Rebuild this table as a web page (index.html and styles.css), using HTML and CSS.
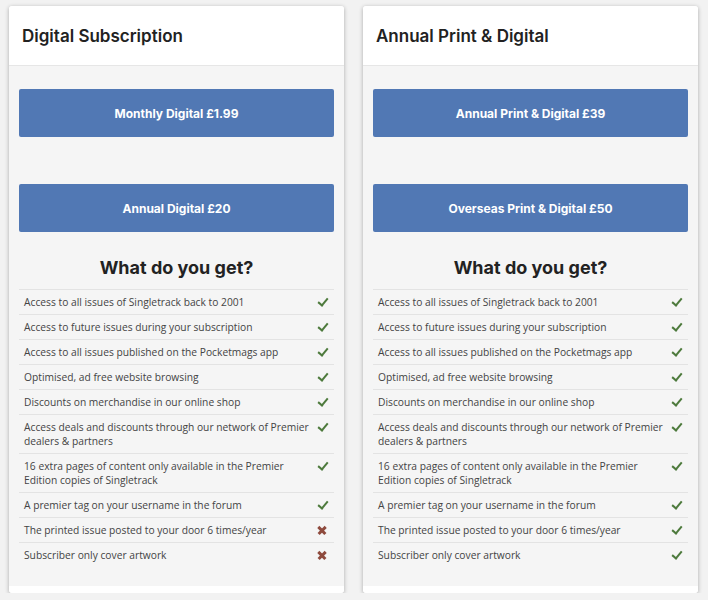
FILE: index.html
```html
<!DOCTYPE html>
<html>
<head>
<meta charset="utf-8">
<link rel="stylesheet" href="styles.css">
</head>
<body>
<div class="grid">
  <div class="card">
    <div class="card-head"><h2>Digital Subscription</h2></div>
    <div class="card-body">
      <a class="btn">Monthly Digital £1.99</a>
      <a class="btn">Annual Digital £20</a>
      <h3>What do you get?</h3>
      <ul class="list">
        <li><span>Access to all issues of Singletrack back to 2001</span><i class="ok"></i></li>
        <li><span>Access to future issues during your subscription</span><i class="ok"></i></li>
        <li><span>Access to all issues published on the Pocketmags app</span><i class="ok"></i></li>
        <li><span>Optimised, ad free website browsing</span><i class="ok"></i></li>
        <li><span>Discounts on merchandise in our online shop</span><i class="ok"></i></li>
        <li><span>Access deals and discounts through our network of Premier dealers &amp; partners</span><i class="ok"></i></li>
        <li><span>16 extra pages of content only available in the Premier Edition copies of Singletrack</span><i class="ok"></i></li>
        <li><span>A premier tag on your username in the forum</span><i class="ok"></i></li>
        <li><span>The printed issue posted to your door 6 times/year</span><i class="no"></i></li>
        <li><span>Subscriber only cover artwork</span><i class="no"></i></li>
      </ul>
    </div>
    <div class="card-foot"></div>
  </div>
  <div class="card">
    <div class="card-head"><h2>Annual Print &amp; Digital</h2></div>
    <div class="card-body">
      <a class="btn">Annual Print &amp; Digital £39</a>
      <a class="btn">Overseas Print &amp; Digital £50</a>
      <h3>What do you get?</h3>
      <ul class="list">
        <li><span>Access to all issues of Singletrack back to 2001</span><i class="ok"></i></li>
        <li><span>Access to future issues during your subscription</span><i class="ok"></i></li>
        <li><span>Access to all issues published on the Pocketmags app</span><i class="ok"></i></li>
        <li><span>Optimised, ad free website browsing</span><i class="ok"></i></li>
        <li><span>Discounts on merchandise in our online shop</span><i class="ok"></i></li>
        <li><span>Access deals and discounts through our network of Premier dealers &amp; partners</span><i class="ok"></i></li>
        <li><span>16 extra pages of content only available in the Premier Edition copies of Singletrack</span><i class="ok"></i></li>
        <li><span>A premier tag on your username in the forum</span><i class="ok"></i></li>
        <li><span>The printed issue posted to your door 6 times/year</span><i class="ok"></i></li>
        <li><span>Subscriber only cover artwork</span><i class="ok"></i></li>
      </ul>
    </div>
    <div class="card-foot"></div>
  </div>
</div>
</body>
</html>
```
FILE: styles.css
```css
html, body { margin: 0; padding: 0; }
body {
  background: #f2f2f2;
  font-family: "Open Sans", "Liberation Sans", sans-serif;
  color: #333;
}
.grid {
  display: grid;
  grid-template-columns: 335px 335px;
  column-gap: 19px;
  padding: 6px 10px 0 9px;
  align-items: start;
}
.card {
  background: #f5f5f5;
  border-radius: 3px;
  box-shadow: 0 1px 4px rgba(0,0,0,0.3);
  overflow: hidden;
}
.card-head {
  background: #fff;
  height: 60px;
  border-bottom: 1px solid #e6e6e6;
  box-sizing: border-box;
  display: flex;
  align-items: center;
  padding: 0 13px;
}
.card-head h2 {
  margin: 0;
  font-family: "Inter", "Open Sans", sans-serif;
  font-weight: 600;
  font-size: 17px;
  color: #222;
}
.card-body {
  padding: 23px 10px 19px;
}
.btn {
  display: flex;
  align-items: center;
  justify-content: center;
  height: 48px;
  background: #5178b4;
  color: #fff;
  border-radius: 2px;
  font-family: "Inter", "Open Sans", sans-serif;
  font-weight: 700;
  font-size: 12px;
  margin-bottom: 47px;
}
.btn + .btn { margin-bottom: 0; }
h3 {
  margin: 24px 0 9px;
  text-align: center;
  font-family: "Inter", "Open Sans", sans-serif;
  font-weight: 700;
  font-size: 18px;
  color: #222;
  line-height: 24px;
}
.list {
  list-style: none;
  margin: 0;
  padding: 0;
}
.list li {
  display: flex;
  justify-content: space-between;
  align-items: flex-start;
  border-top: 1px solid #e3e3e3;
  padding: 5px 7px 5px 5px;
  font-size: 10.25px;
  line-height: 14px;
  color: #444;
}
.list li span { max-width: 292px; }
.list i {
  width: 10px;
  height: 10px;
  margin-top: 2px;
  flex: none;
}
.ok::before {
  content: "";
  display: block;
  width: 4px;
  height: 8px;
  border-right: 2.5px solid #4d7a3c;
  border-bottom: 2.5px solid #4d7a3c;
  transform: translate(3px, -1px) rotate(40deg);
}
.no { position: relative; }
.no::before, .no::after {
  content: "";
  position: absolute;
  left: 0;
  top: 4px;
  width: 10px;
  height: 2.5px;
  background: #8e4a3d;
  transform: rotate(45deg);
}
.no::after { transform: rotate(-45deg); }
.card-foot {
  background: #fff;
  height: 7px;
}
```
